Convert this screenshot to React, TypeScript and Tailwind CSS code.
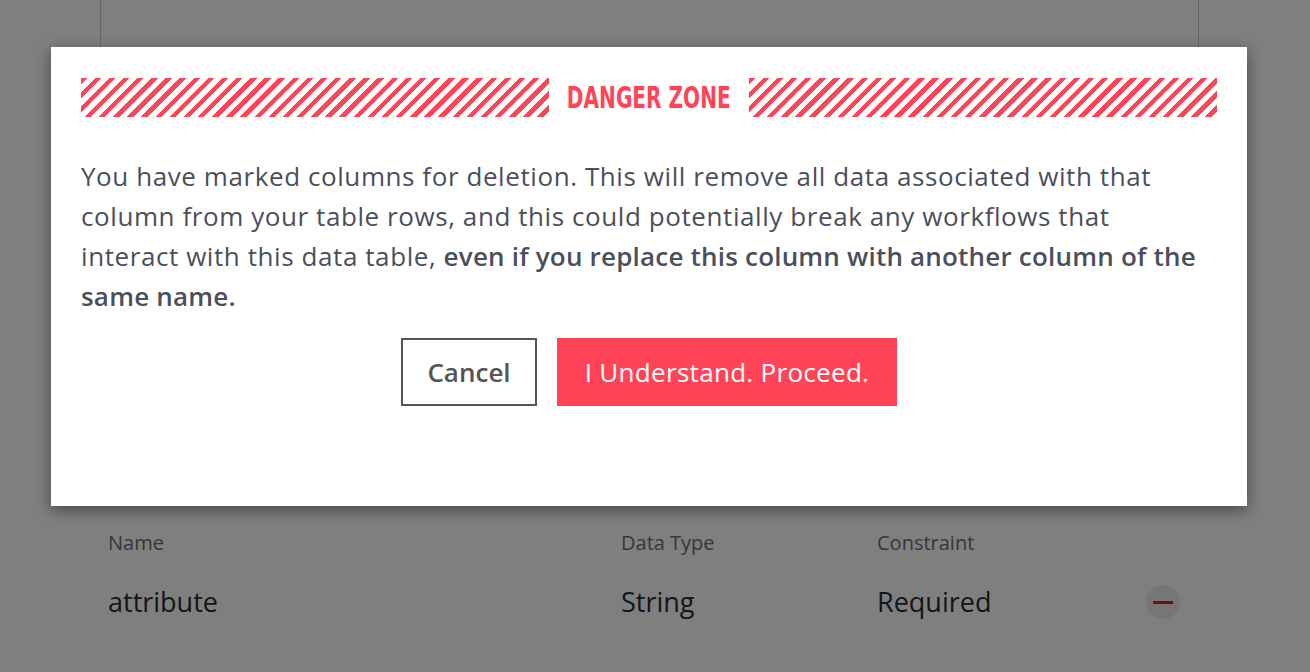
import React from 'react';

const stripes =
    'bg-[repeating-linear-gradient(135deg,#ff4458_0px,#ff4458_4.5px,#ffffff_4.5px,#ffffff_10px)]';

const App = () => {
    return (
        <div className="relative h-[672px] w-[1310px] overflow-hidden bg-white font-['Open_Sans',sans-serif]">
            {/* page behind the dialog */}
            <div className="ml-[100px] h-[300px] w-[1099px] border-x border-[#cfcfcf]" />
            <div className="mt-[228px] px-[108px]">
                <div className="grid grid-cols-[513px_256px_1fr_40px] items-center text-[20px] text-[#6a6e78]">
                    <span>Name</span>
                    <span>Data Type</span>
                    <span>Constraint</span>
                    <span />
                </div>
                <div className="mt-[24px] grid grid-cols-[513px_256px_1fr_40px] items-center text-[27px] text-[#2a2d33]">
                    <span>attribute</span>
                    <span>String</span>
                    <span>Required</span>
                    <span className="-ml-[16px] flex h-[34px] w-[34px] items-center justify-center rounded-full bg-[#ececec]">
                        <span className="h-[3px] w-[20px] bg-[#e01e1e]" />
                    </span>
                </div>
            </div>

            {/* overlay */}
            <div className="absolute inset-0 bg-black/50">
                <div className="ml-[51px] mt-[47px] h-[459px] w-[1196px] bg-white px-[30px] pt-[31px] shadow-[0_4px_14px_rgba(0,0,0,0.45)]">
                    <div className="flex h-[39px] items-center gap-[20px]">
                        <div className={`h-full flex-1 ${stripes}`} />
                        <div className="flex w-[160px] justify-center">
                            <span className="inline-block scale-x-[0.72] whitespace-nowrap font-['DejaVu_Sans_Condensed',sans-serif] text-[31px] font-bold leading-none text-[#ff4458]">
                                DANGER ZONE
                            </span>
                        </div>
                        <div className={`h-full flex-1 ${stripes}`} />
                    </div>
                    <p className="mt-[39px] whitespace-nowrap text-[26px] leading-[40px] tracking-[0.58px] text-[#4b4f5b]">
                        You have marked columns for deletion. This will remove all data associated with that
                        <br />
                        column from your table rows, and this could potentially break any workflows that
                        <br />
                        interact with this data table,{' '}
                        <strong className="font-semibold tracking-[0.2px]">even if you replace this column with another column of the</strong>
                        <br />
                        <strong className="font-semibold tracking-[0.2px]">same name.</strong>
                    </p>
                    <div className="mt-[22px] flex justify-center gap-[20px]">
                        <button className="h-[68px] w-[136px] border-2 border-[#555555] bg-white text-[26px] font-semibold text-[#555555]">
                            Cancel
                        </button>
                        <button className="h-[68px] w-[340px] bg-[#ff4458] text-[26px] font-medium tracking-[0.3px] text-white">
                            I Understand. Proceed.
                        </button>
                    </div>
                </div>
            </div>
        </div>
    );
};

export default App;
